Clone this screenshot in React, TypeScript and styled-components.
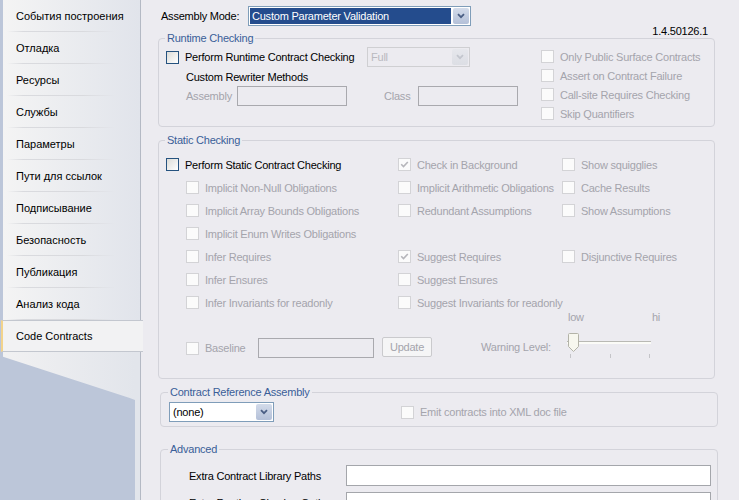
import React from "react";
import styled, { createGlobalStyle, css } from "styled-components";

const GlobalStyle = createGlobalStyle`
  html, body { margin: 0; padding: 0; }
  body {
    font-family: "Liberation Sans", Arial, sans-serif;
    font-size: 11px;
    color: #000;
    background: #ecebf0;
    overflow: hidden;
  }
`;

const BG = "#ecebf0";
const DIS = "#a4a4ac";

const Page = styled.div`
  display: flex;
  width: 739px;
  height: 500px;
  overflow: hidden;
`;

const Sidebar = styled.nav`
  width: 140px;
  flex-shrink: 0;
  display: flex;
  flex-direction: column;
  background: #bcc6d9;
  border-right: 1px solid #b4b9c4;
`;

const Tab = styled.div<{ $active?: boolean }>`
  position: relative;
  height: 32px;
  box-sizing: border-box;
  margin-left: 3px;
  padding-left: 13px;
  display: flex;
  align-items: center;
  background: linear-gradient(to right, #f4f4f4, #e1e4eb);
  &::after {
    content: "";
    position: absolute;
    left: 4px;
    right: 24px;
    bottom: 0;
    height: 1px;
    background: linear-gradient(to right, transparent, #d9dade 15%, #d9dade 70%, transparent);
  }
  ${(p) =>
    p.$active &&
    css`
      z-index: 1;
      margin-left: 1px;
      margin-right: -3px;
      background: #f2f2f3;
      border-top: 1px solid #c3c7cf;
      border-bottom: 1px solid #c3c7cf;
      border-left: 2px solid #f2d38c;
      &::after {
        display: none;
      }
    `}
`;

const SidebarRest = styled.div`
  flex: 1;
  border-right: 5px solid #e2e5eb;
`;

const Fold = styled.div`
  height: 48px;
  margin-left: 3px;
  background: linear-gradient(to right, #f1f1f2, #e2e5eb);
  clip-path: polygon(0 0, 100% 0, 100% 100%, 96% 96%, 0 10%);
`;

const Main = styled.main`
  flex: 1;
  padding: 6px 24px 0 17px;
  display: flex;
  flex-direction: column;
  letter-spacing: -0.22px;
`;

const TopRow = styled.div`
  display: flex;
  align-items: center;
  height: 20px;
  padding-left: 3px;
`;

const FieldLabel = styled.span<{ $w?: number; $disabled?: boolean; $pad?: number }>`
  ${(p) => p.$w && `width: ${p.$w}px; flex-shrink: 0;`}
  box-sizing: border-box;
  padding-left: ${(p) => p.$pad ?? 0}px;
  color: ${(p) => (p.$disabled ? DIS : "#000")};
  white-space: nowrap;
`;

const Version = styled.div`
  align-self: flex-end;
  margin: -1px 7px 0 0;
  line-height: 12px;
`;

const Group = styled.section<{ $inset?: boolean; $gap: number }>`
  position: relative;
  margin-top: ${(p) => p.$gap}px;
  border: 1px solid #d3d3da;
  border-radius: 4px;
  ${(p) => p.$inset && "margin-left: 2px; margin-right: -3px;"}
`;

const GroupTitle = styled.span<{ $inset?: boolean }>`
  position: absolute;
  top: -7px;
  left: ${(p) => (p.$inset ? 7 : 6)}px;
  padding: 0 2px;
  background: ${BG};
  color: #3a5e98;
  line-height: 13px;
`;

const RuntimeBody = styled.div`
  display: flex;
  padding: 8px 0 3px 7px;
`;

const LeftCol = styled.div`
  width: 375px;
  display: flex;
  flex-direction: column;
`;

const RightCol = styled.div`
  display: flex;
  flex-direction: column;
`;

const Row = styled.div<{ $h: number; $indent?: number }>`
  display: flex;
  align-items: center;
  height: ${(p) => p.$h}px;
  padding-left: ${(p) => p.$indent ?? 0}px;
`;

const Option = styled.label<{ $w?: number; $indent?: number; $disabled?: boolean }>`
  display: flex;
  align-items: center;
  gap: 6px;
  ${(p) => p.$w && `width: ${p.$w}px; flex-shrink: 0;`}
  padding-left: ${(p) => p.$indent ?? 0}px;
  color: ${(p) => (p.$disabled ? DIS : "#000")};
  white-space: nowrap;
`;

const Box = styled.span<{ $disabled?: boolean }>`
  width: 13px;
  height: 13px;
  box-sizing: border-box;
  flex-shrink: 0;
  display: flex;
  align-items: center;
  justify-content: center;
  ${(p) =>
    p.$disabled
      ? css`
          border: 1px solid #d3d3d6;
          background: #fbfbfb;
        `
      : css`
          border: 1px solid #25527f;
          background: linear-gradient(135deg, #dcdcd8, #ffffff);
        `}
`;

const SelectBox = styled.div<{ $w: number; $disabled?: boolean }>`
  width: ${(p) => p.$w}px;
  height: 20px;
  box-sizing: border-box;
  padding: 1px;
  display: flex;
  flex-shrink: 0;
  border: 1px solid ${(p) => (p.$disabled ? "#cfcfd2" : "#7f9db9")};
  background: ${(p) => (p.$disabled ? BG : "#fff")};
`;

const SelectValue = styled.div<{ $highlight?: boolean; $disabled?: boolean }>`
  flex: 1;
  padding-left: 2px;
  line-height: 16px;
  white-space: nowrap;
  color: ${(p) => (p.$highlight ? "#fff" : p.$disabled ? "#b9b9bf" : "#000")};
  background: ${(p) => (p.$highlight ? "#244c8d" : "transparent")};
  margin-right: 2px;
`;

const SelectButton = styled.div<{ $disabled?: boolean }>`
  width: 16px;
  display: flex;
  align-items: center;
  justify-content: center;
  border-radius: 2px;
  background: ${(p) =>
    p.$disabled
      ? "linear-gradient(#e6e7ec, #dcdee4)"
      : "linear-gradient(#d3dbea, #b4c0d8)"};
`;

const Input = styled.div<{ $w: number; $h?: number; $enabled?: boolean }>`
  width: ${(p) => p.$w}px;
  height: ${(p) => p.$h ?? 20}px;
  box-sizing: border-box;
  flex-shrink: 0;
  border: 1px solid ${(p) => (p.$enabled ? "#a4a6ab" : "#a9a9ae")};
  background: ${(p) => (p.$enabled ? "#fff" : BG)};
`;

const StaticGrid = styled.div`
  display: grid;
  grid-template-columns: 232px 164px 1fr;
  grid-auto-rows: 23px;
  align-items: center;
  padding: 12px 0 0 7px;
`;

const BottomRow = styled.div`
  display: flex;
  align-items: flex-start;
  padding: 0 0 18px 27px;
`;

const BaselineCluster = styled.div`
  display: flex;
  align-items: center;
  height: 24px;
  margin-top: 22px;
`;

const Button = styled.div`
  width: 50px;
  height: 20px;
  box-sizing: border-box;
  margin-left: 8px;
  margin-top: -2px;
  border: 1px solid #cacacd;
  border-radius: 2px;
  background: #f5f5f6;
  color: ${DIS};
  display: flex;
  align-items: center;
  justify-content: center;
`;

const WarningLabel = styled.span`
  width: 86px;
  margin: 26px 0 0 49px;
  line-height: 14px;
  color: ${DIS};
`;

const SliderBox = styled.div`
  width: 95px;
  margin-top: -3px;
  display: flex;
  flex-direction: column;
  color: ${DIS};
`;

const SliderLabels = styled.div`
  display: flex;
  justify-content: space-between;
  line-height: 12px;
  padding: 0 2px 0 1px;
`;

const Track = styled.div`
  position: relative;
  height: 20px;
  margin-top: 10px;
  width: 84px;
  &::before {
    content: "";
    position: absolute;
    left: 0;
    right: 0;
    top: 8px;
    height: 2px;
    border-top: 1px solid #b9b9b4;
    background: #fbfbf7;
  }
`;

const Thumb = styled.div`
  position: absolute;
  left: 1px;
  top: 0;
  width: 11px;
  height: 19px;
`;

const Ticks = styled.div`
  display: flex;
  justify-content: space-between;
  width: 80px;
  padding-left: 3px;
  height: 5px;
  margin-top: 1px;
  span {
    width: 1px;
    height: 4px;
    background: #c4c4c8;
  }
`;

const RefBody = styled.div`
  display: flex;
  align-items: center;
  padding: 9px 0 4px 8px;
`;

const AdvancedBody = styled.div`
  display: flex;
  flex-direction: column;
  gap: 6px;
  padding: 15px 0 10px 28px;
`;

const Chevron = ({ color }: { color: string }) => (
  <svg width="8" height="6" viewBox="0 0 8 6">
    <path d="M1 1.2 L4 4.2 L7 1.2" fill="none" stroke={color} strokeWidth="1.8" />
  </svg>
);

const Check = () => (
  <svg width="9" height="9" viewBox="0 0 9 9">
    <path d="M1.2 4.3 L3.5 6.6 L7.8 2" fill="none" stroke="#b6b6bb" strokeWidth="1.6" />
  </svg>
);

type CheckProps = {
  label?: string;
  checked?: boolean;
  disabled?: boolean;
  indent?: number;
  w?: number;
};

const CheckOption = ({ label, checked, disabled = true, indent, w }: CheckProps) => (
  <Option $disabled={disabled} $indent={indent} $w={w}>
    <Box $disabled={disabled}>{checked && <Check />}</Box>
    {label && <span>{label}</span>}
  </Option>
);

const Select = ({
  w,
  value,
  highlight,
  disabled,
}: {
  w: number;
  value: string;
  highlight?: boolean;
  disabled?: boolean;
}) => (
  <SelectBox $w={w} $disabled={disabled}>
    <SelectValue $highlight={highlight} $disabled={disabled}>
      {value}
    </SelectValue>
    <SelectButton $disabled={disabled}>
      <Chevron color={disabled ? "#c3c6ce" : "#4a5e84"} />
    </SelectButton>
  </SelectBox>
);

const tabs = [
  "События построения",
  "Отладка",
  "Ресурсы",
  "Службы",
  "Параметры",
  "Пути для ссылок",
  "Подписывание",
  "Безопасность",
  "Публикация",
  "Анализ кода",
];

type Cell = { label: string; checked?: boolean } | null;

const staticRows: Cell[][] = [
  [null, { label: "Check in Background", checked: true }, { label: "Show squigglies" }],
  [{ label: "Implicit Non-Null Obligations" }, { label: "Implicit Arithmetic Obligations" }, { label: "Cache Results" }],
  [{ label: "Implicit Array Bounds Obligations" }, { label: "Redundant Assumptions" }, { label: "Show Assumptions" }],
  [{ label: "Implicit Enum Writes Obligations" }, null, null],
  [{ label: "Infer Requires" }, { label: "Suggest Requires", checked: true }, { label: "Disjunctive Requires" }],
  [{ label: "Infer Ensures" }, { label: "Suggest Ensures" }, null],
  [{ label: "Infer Invariants for readonly" }, { label: "Suggest Invariants for readonly" }, null],
];

export default function App() {
  return (
    <>
      <GlobalStyle />
      <Page>
        <Sidebar>
          {tabs.map((t) => (
            <Tab key={t}>{t}</Tab>
          ))}
          <Tab $active>Code Contracts</Tab>
          <SidebarRest>
            <Fold />
          </SidebarRest>
        </Sidebar>

        <Main>
          <TopRow>
            <FieldLabel $w={87}>Assembly Mode:</FieldLabel>
            <Select w={223} value="Custom Parameter Validation" highlight />
          </TopRow>
          <Version>1.4.50126.1</Version>

          <Group $gap={1}>
            <GroupTitle>Runtime Checking</GroupTitle>
            <RuntimeBody>
              <LeftCol>
                <Row $h={20}>
                  <CheckOption label="Perform Runtime Contract Checking" disabled={false} w={201} />
                  <Select w={103} value="Full" disabled />
                </Row>
                <Row $h={19} $indent={20}>
                  <FieldLabel>Custom Rewriter Methods</FieldLabel>
                </Row>
                <Row $h={20} $indent={20}>
                  <FieldLabel $w={51} $disabled>Assembly</FieldLabel>
                  <Input $w={110} />
                  <FieldLabel $w={71} $pad={37} $disabled>
                    Class
                  </FieldLabel>
                  <Input $w={100} />
                </Row>
              </LeftCol>
              <RightCol>
                {["Only Public Surface Contracts", "Assert on Contract Failure", "Call-site Requires Checking", "Skip Quantifiers"].map(
                  (l) => (
                    <Row $h={19} key={l}>
                      <CheckOption label={l} />
                    </Row>
                  )
                )}
              </RightCol>
            </RuntimeBody>
          </Group>

          <Group $gap={13}>
            <GroupTitle>Static Checking</GroupTitle>
            <StaticGrid>
              {staticRows.map((row, ri) =>
                row.map((cell, ci) => {
                  if (ri === 0 && ci === 0)
                    return <CheckOption key="psc" label="Perform Static Contract Checking" disabled={false} />;
                  if (!cell) return <span key={`${ri}-${ci}`} />;
                  return (
                    <CheckOption
                      key={`${ri}-${ci}`}
                      label={cell.label}
                      checked={cell.checked}
                      indent={ci === 0 ? 20 : 0}
                    />
                  );
                })
              )}
            </StaticGrid>
            <BottomRow>
              <BaselineCluster>
                <CheckOption label="Baseline" w={72} />
                <Input $w={116} />
                <Button>Update</Button>
              </BaselineCluster>
              <WarningLabel>Warning Level:</WarningLabel>
              <SliderBox>
                <SliderLabels>
                  <span>low</span>
                  <span>hi</span>
                </SliderLabels>
                <Track>
                  <Thumb>
                    <svg width="11" height="19" viewBox="0 0 11 19">
                      <path
                        d="M0.5 1.5 Q0.5 0.5 1.5 0.5 L9.5 0.5 Q10.5 0.5 10.5 1.5 L10.5 13.5 L5.5 18.5 L0.5 13.5 Z"
                        fill="#f7f7ef"
                        stroke="#b3b3a8"
                      />
                    </svg>
                  </Thumb>
                </Track>
                <Ticks>
                  <span />
                  <span />
                  <span />
                </Ticks>
              </SliderBox>
            </BottomRow>
          </Group>

          <Group $gap={13} $inset>
            <GroupTitle $inset>Contract Reference Assembly</GroupTitle>
            <RefBody>
              <Select w={105} value="(none)" />
              <CheckOption label="Emit contracts into XML doc file" indent={127} />
            </RefBody>
          </Group>

          <Group $gap={22} $inset>
            <GroupTitle $inset>Advanced</GroupTitle>
            <AdvancedBody>
              <Row $h={21}>
                <FieldLabel $w={157}>Extra Contract Library Paths</FieldLabel>
                <Input $w={365} $h={21} $enabled />
              </Row>
              <Row $h={21}>
                <FieldLabel $w={157}>Extra Runtime Checker Options</FieldLabel>
                <Input $w={365} $h={21} $enabled />
              </Row>
            </AdvancedBody>
          </Group>
        </Main>
      </Page>
    </>
  );
}
